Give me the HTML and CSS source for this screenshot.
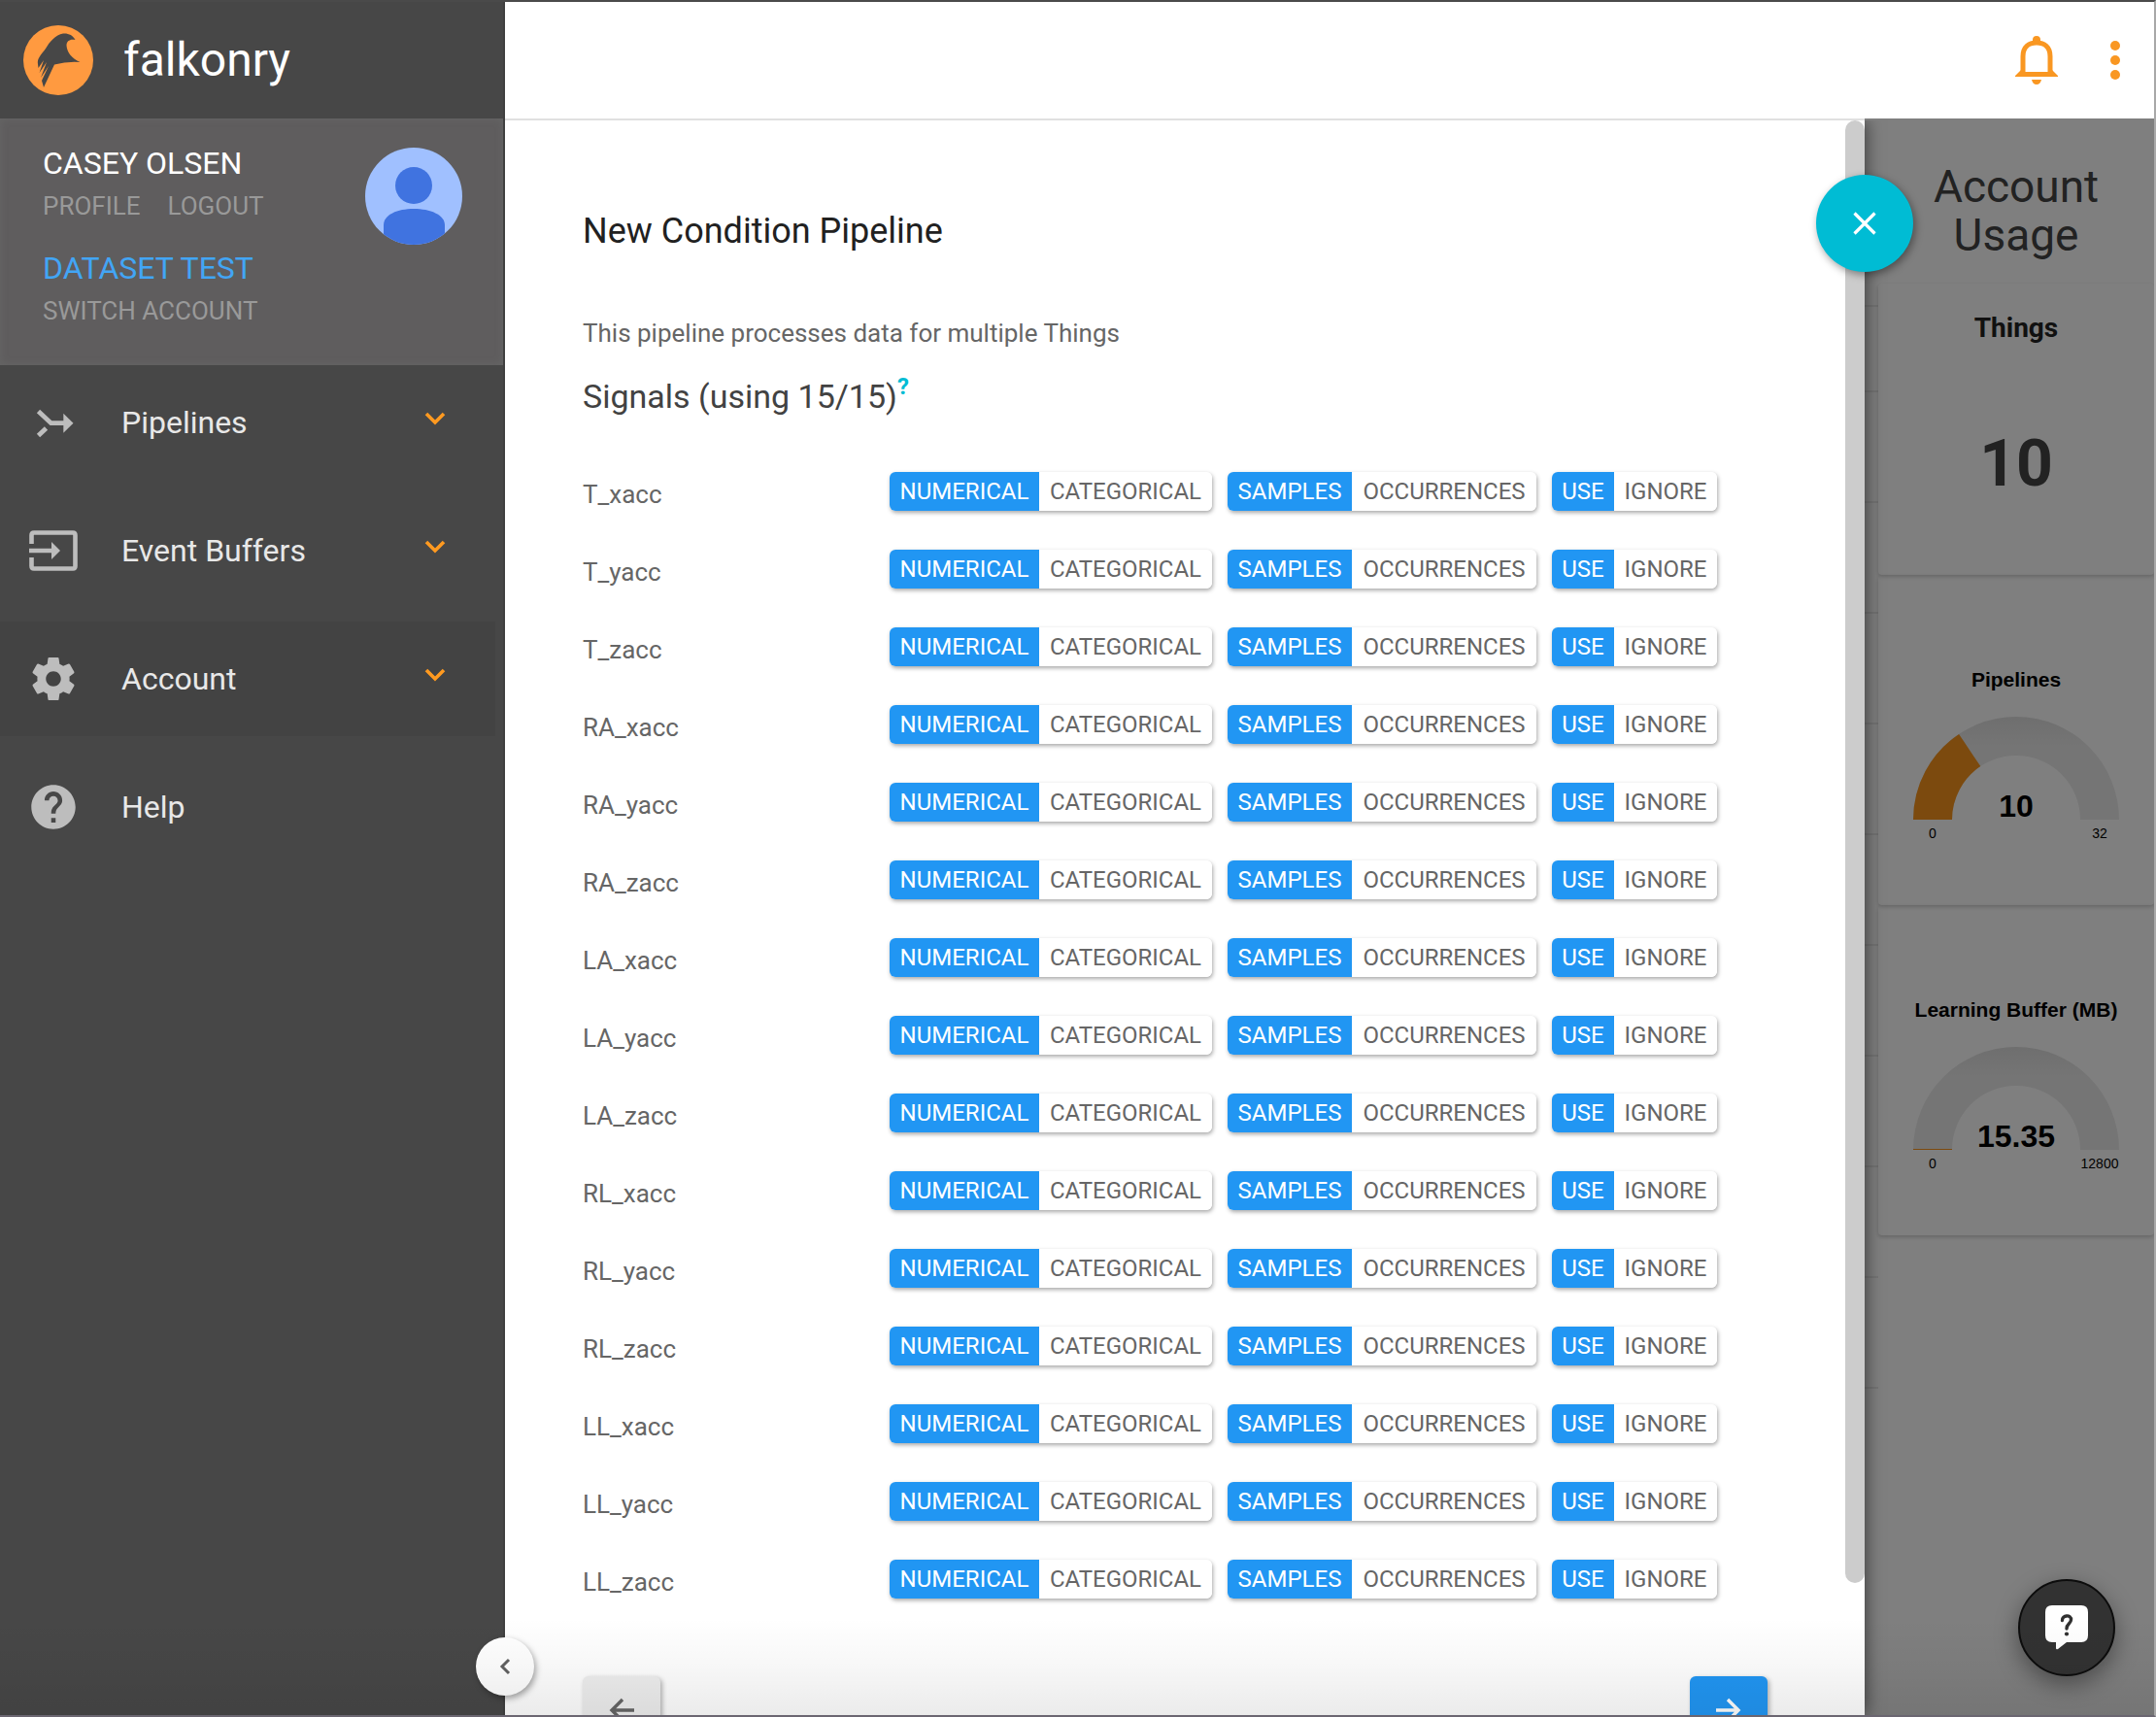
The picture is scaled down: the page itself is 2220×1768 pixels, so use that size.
FILE: index.html
```
<!DOCTYPE html>
<html lang="en">
<head>
<meta charset="utf-8">
<title>Falkonry</title>
<link rel="stylesheet" href="styles.css">
</head>
<body>
<div class="app">
  <aside class="sidebar">
    <div class="brand">
      <svg class="brand-logo" viewBox="0 0 72 72" aria-hidden="true"><circle cx="36" cy="36" r="36" fill="#ff9a40"/><path d="M53.500 15C51 10 46 8 41 8.500C33 10 27 17 23 24C18 31 14 34 15 40L15.500 44L21 36L16.500 49L24 38L18 54L26 42L19 57L21 64L32 40.500Q45 37 58.500 38C50 34 45 28 44.500 21C44.500 16 48 14 53.500 15Z" fill="#474747"/></svg>
      <span class="brand-name">falkonry</span>
    </div>
    <section class="profile">
      <div class="profile-info">
        <div class="profile-name">CASEY OLSEN</div>
        <div class="profile-links"><a href="#profile">PROFILE</a><a href="#logout">LOGOUT</a></div>
        <div class="profile-account">DATASET TEST</div>
        <div class="profile-links"><a href="#switch">SWITCH ACCOUNT</a></div>
      </div>
      <svg class="avatar" viewBox="0 0 100 100" aria-hidden="true"><defs><clipPath id="av"><circle cx="50" cy="50" r="50"/></clipPath></defs><g clip-path="url(#av)"><rect width="100" height="100" fill="#a0c0ff"/><circle cx="50" cy="39" r="19" fill="#4073e0"/><path d="M19 100V80C19 69 33 63 50 63S82 69 82 80V100Z" fill="#4073e0"/></g></svg>
    </section>
    <nav class="nav">
      <a class="nav-item" href="#pipelines">
        <svg class="nav-icon" viewBox="0 0 50 50" aria-hidden="true"><path d="M9.500 13.500L22.500 25.700H37M9.500 38.500L17.500 31" fill="none" stroke="#bdbdbd" stroke-width="4.800"/><path d="M35.300 15.700L45.500 25.700L35.300 35.700Z" fill="#bdbdbd"/></svg>
        <span>Pipelines</span><svg class="nav-caret" viewBox="0 0 22 14" aria-hidden="true"><path d="M2 2L11 11L20 2" fill="none" stroke="#ff9a20" stroke-width="3.6"/></svg></a>
      <a class="nav-item" href="#buffers">
        <svg class="nav-icon" viewBox="0 0 50 50" aria-hidden="true"><path d="M2.500 18V9Q2.500 6.500 5 6.500H45Q47.500 6.500 47.500 9V41Q47.500 43.500 45 43.500H5Q2.500 43.500 2.500 41V32M0 25H24" fill="none" stroke="#bdbdbd" stroke-width="4.600"/><path d="M23 16L32 25L23 34Z" fill="#bdbdbd"/></svg>
        <span>Event Buffers</span><svg class="nav-caret" viewBox="0 0 22 14" aria-hidden="true"><path d="M2 2L11 11L20 2" fill="none" stroke="#ff9a20" stroke-width="3.6"/></svg></a>
      <a class="nav-item nav-item-active" href="#account">
        <svg class="nav-icon" viewBox="0.700 0.700 22.600 22.600" aria-hidden="true"><path fill="#bdbdbd" d="M19.430 12.980c.04-.32.07-.64.07-.98s-.03-.66-.07-.98l2.110-1.650c.19-.15.24-.42.12-.64l-2-3.460c-.12-.22-.39-.3-.61-.22l-2.490 1c-.52-.4-1.080-.73-1.690-.98l-.38-2.650C14.460 2.180 14.250 2 14 2h-4c-.25 0-.46.18-.49.42l-.38 2.650c-.61.25-1.170.59-1.690.98l-2.490-1c-.23-.09-.49 0-.61.22l-2 3.460c-.13.22-.07.49.12.64l2.110 1.650c-.04.32-.07.65-.07.98s.03.66.07.98l-2.110 1.650c-.19.15-.24.42-.12.64l2 3.460c.12.22.39.3.61.22l2.490-1c.52.4 1.080.73 1.690.98l.38 2.650c.03.24.24.42.49.42h4c.25 0 .46-.18.49-.42l.38-2.650c.61-.25 1.170-.59 1.690-.98l2.490 1c.23.09.49 0 .61-.22l2-3.460c.12-.22.07-.49-.12-.64l-2.110-1.650zM12 15.500c-1.930 0-3.500-1.570-3.500-3.500s1.570-3.500 3.500-3.500 3.500 1.570 3.500 3.500-1.570 3.500-3.500 3.500z"/></svg>
        <span>Account</span><svg class="nav-caret" viewBox="0 0 22 14" aria-hidden="true"><path d="M2 2L11 11L20 2" fill="none" stroke="#ff9a20" stroke-width="3.6"/></svg></a>
      <a class="nav-item" href="#help">
        <svg class="nav-icon" viewBox="1 1 22 22" aria-hidden="true"><path fill="#bdbdbd" d="M12 2C6.480 2 2 6.480 2 12s4.480 10 10 10 10-4.480 10-10S17.520 2 12 2zm1 17h-2v-2h2v2zm2.070-7.750l-.9.920C13.450 12.900 13 13.500 13 15h-2v-.5c0-1.100.45-2.100 1.170-2.830l1.240-1.260c.37-.36.59-.86.59-1.410 0-1.100-.9-2-2-2s-2 .9-2 2H8c0-2.210 1.790-4 4-4s4 1.790 4 4c0 .88-.36 1.680-.93 2.250z"/></svg>
        <span>Help</span></a>
    </nav>
    <button class="collapse" type="button" aria-label="Collapse menu"><svg viewBox="0 0 12 18" aria-hidden="true"><path d="M10 2L3 9L10 16" fill="none" stroke="#616161" stroke-width="3"/></svg></button>
  </aside>

  <header class="topbar">
    <button class="icon-button bell" type="button" aria-label="Notifications"><svg viewBox="0 0 44 50" aria-hidden="true"><path d="M8 40V21C8 11 14 7 22 7S36 11 36 21V40" fill="none" stroke="#f99722" stroke-width="5"/><path d="M18 6V4A4 4 0 0 1 26 4V6ZM0 41L6 35V37H38V35L44 41V42H0ZM17 45H27Q26 50 22 50T17 45Z" fill="#f99722"/></svg></button>
    <button class="icon-button more" type="button" aria-label="More"><svg viewBox="0 0 10 40" aria-hidden="true"><g fill="#f99722"><circle cx="5" cy="5" r="5"/><circle cx="5" cy="20" r="5"/><circle cx="5" cy="35" r="5"/></g></svg></button>
  </header>

  <main class="workspace">
    <section class="panel">
      <h1 class="panel-title">New Condition Pipeline</h1>
      <p class="panel-note">This pipeline processes data for multiple Things</p>
      <h2 class="panel-subtitle">Signals (using 15/15)<a class="hint" href="#signals-help">?</a></h2>
      <ul class="signals">
        <li class="signal"><span class="signal-name">T_xacc</span><div class="toggle type"><button type="button" class="on">NUMERICAL</button><button type="button">CATEGORICAL</button></div><div class="toggle kind"><button type="button" class="on">SAMPLES</button><button type="button">OCCURRENCES</button></div><div class="toggle usage-choice"><button type="button" class="on">USE</button><button type="button">IGNORE</button></div></li>
        <li class="signal"><span class="signal-name">T_yacc</span><div class="toggle type"><button type="button" class="on">NUMERICAL</button><button type="button">CATEGORICAL</button></div><div class="toggle kind"><button type="button" class="on">SAMPLES</button><button type="button">OCCURRENCES</button></div><div class="toggle usage-choice"><button type="button" class="on">USE</button><button type="button">IGNORE</button></div></li>
        <li class="signal"><span class="signal-name">T_zacc</span><div class="toggle type"><button type="button" class="on">NUMERICAL</button><button type="button">CATEGORICAL</button></div><div class="toggle kind"><button type="button" class="on">SAMPLES</button><button type="button">OCCURRENCES</button></div><div class="toggle usage-choice"><button type="button" class="on">USE</button><button type="button">IGNORE</button></div></li>
        <li class="signal"><span class="signal-name">RA_xacc</span><div class="toggle type"><button type="button" class="on">NUMERICAL</button><button type="button">CATEGORICAL</button></div><div class="toggle kind"><button type="button" class="on">SAMPLES</button><button type="button">OCCURRENCES</button></div><div class="toggle usage-choice"><button type="button" class="on">USE</button><button type="button">IGNORE</button></div></li>
        <li class="signal"><span class="signal-name">RA_yacc</span><div class="toggle type"><button type="button" class="on">NUMERICAL</button><button type="button">CATEGORICAL</button></div><div class="toggle kind"><button type="button" class="on">SAMPLES</button><button type="button">OCCURRENCES</button></div><div class="toggle usage-choice"><button type="button" class="on">USE</button><button type="button">IGNORE</button></div></li>
        <li class="signal"><span class="signal-name">RA_zacc</span><div class="toggle type"><button type="button" class="on">NUMERICAL</button><button type="button">CATEGORICAL</button></div><div class="toggle kind"><button type="button" class="on">SAMPLES</button><button type="button">OCCURRENCES</button></div><div class="toggle usage-choice"><button type="button" class="on">USE</button><button type="button">IGNORE</button></div></li>
        <li class="signal"><span class="signal-name">LA_xacc</span><div class="toggle type"><button type="button" class="on">NUMERICAL</button><button type="button">CATEGORICAL</button></div><div class="toggle kind"><button type="button" class="on">SAMPLES</button><button type="button">OCCURRENCES</button></div><div class="toggle usage-choice"><button type="button" class="on">USE</button><button type="button">IGNORE</button></div></li>
        <li class="signal"><span class="signal-name">LA_yacc</span><div class="toggle type"><button type="button" class="on">NUMERICAL</button><button type="button">CATEGORICAL</button></div><div class="toggle kind"><button type="button" class="on">SAMPLES</button><button type="button">OCCURRENCES</button></div><div class="toggle usage-choice"><button type="button" class="on">USE</button><button type="button">IGNORE</button></div></li>
        <li class="signal"><span class="signal-name">LA_zacc</span><div class="toggle type"><button type="button" class="on">NUMERICAL</button><button type="button">CATEGORICAL</button></div><div class="toggle kind"><button type="button" class="on">SAMPLES</button><button type="button">OCCURRENCES</button></div><div class="toggle usage-choice"><button type="button" class="on">USE</button><button type="button">IGNORE</button></div></li>
        <li class="signal"><span class="signal-name">RL_xacc</span><div class="toggle type"><button type="button" class="on">NUMERICAL</button><button type="button">CATEGORICAL</button></div><div class="toggle kind"><button type="button" class="on">SAMPLES</button><button type="button">OCCURRENCES</button></div><div class="toggle usage-choice"><button type="button" class="on">USE</button><button type="button">IGNORE</button></div></li>
        <li class="signal"><span class="signal-name">RL_yacc</span><div class="toggle type"><button type="button" class="on">NUMERICAL</button><button type="button">CATEGORICAL</button></div><div class="toggle kind"><button type="button" class="on">SAMPLES</button><button type="button">OCCURRENCES</button></div><div class="toggle usage-choice"><button type="button" class="on">USE</button><button type="button">IGNORE</button></div></li>
        <li class="signal"><span class="signal-name">RL_zacc</span><div class="toggle type"><button type="button" class="on">NUMERICAL</button><button type="button">CATEGORICAL</button></div><div class="toggle kind"><button type="button" class="on">SAMPLES</button><button type="button">OCCURRENCES</button></div><div class="toggle usage-choice"><button type="button" class="on">USE</button><button type="button">IGNORE</button></div></li>
        <li class="signal"><span class="signal-name">LL_xacc</span><div class="toggle type"><button type="button" class="on">NUMERICAL</button><button type="button">CATEGORICAL</button></div><div class="toggle kind"><button type="button" class="on">SAMPLES</button><button type="button">OCCURRENCES</button></div><div class="toggle usage-choice"><button type="button" class="on">USE</button><button type="button">IGNORE</button></div></li>
        <li class="signal"><span class="signal-name">LL_yacc</span><div class="toggle type"><button type="button" class="on">NUMERICAL</button><button type="button">CATEGORICAL</button></div><div class="toggle kind"><button type="button" class="on">SAMPLES</button><button type="button">OCCURRENCES</button></div><div class="toggle usage-choice"><button type="button" class="on">USE</button><button type="button">IGNORE</button></div></li>
        <li class="signal"><span class="signal-name">LL_zacc</span><div class="toggle type"><button type="button" class="on">NUMERICAL</button><button type="button">CATEGORICAL</button></div><div class="toggle kind"><button type="button" class="on">SAMPLES</button><button type="button">OCCURRENCES</button></div><div class="toggle usage-choice"><button type="button" class="on">USE</button><button type="button">IGNORE</button></div></li>
      </ul>
      <div class="panel-actions">
        <button class="step step-back" type="button" aria-label="Back"><svg viewBox="0 0 26 26" aria-hidden="true"><path d="M26 13H3M14 2L3 13L14 24" fill="none" stroke="currentColor" stroke-width="3.400"/></svg></button>
        <button class="step step-next" type="button" aria-label="Next"><svg viewBox="0 0 26 26" aria-hidden="true"><path d="M0 13H23M12 2L23 13L12 24" fill="none" stroke="currentColor" stroke-width="3.400"/></svg></button>
      </div>
    </section>
    <div class="scroll-thumb"></div>
    <button class="close" type="button" aria-label="Close"><svg viewBox="0 0 24 24" aria-hidden="true"><path d="M1.500 1.500L22.500 22.500M22.500 1.500L1.500 22.500" fill="none" stroke="#fff" stroke-width="3.200"/></svg></button>

    <aside class="usage">
      <div class="rows" aria-hidden="true"><i></i><i></i><i></i><i></i><i></i><i></i><i></i><i></i><i></i><i></i><i></i></div>
      <div class="usage-column">
        <h2 class="usage-title">Account Usage</h2>
        <section class="card">
          <h3 class="card-title">Things</h3>
          <div class="card-value">10</div>
        </section>
        <section class="card">
          <svg class="gauge" viewBox="0 0 284 340" role="img" aria-label="Pipelines 10 of 32">
            <defs><linearGradient id="g" x1="0" y1="0" x2="0" y2="1"><stop offset="0" stop-color="#dedede"/><stop offset=".3" stop-color="#ebebeb"/></linearGradient></defs>
            <text class="gauge-title" x="142" y="115">Pipelines</text>
            <path d="M36 252A106 106 0 0 1 248 252H208A66 66 0 0 0 76 252Z" fill="url(#g)"/>
            <path d="M36 252A106 106 0 0 1 83.100 163.900L105.300 197.100A66 66 0 0 0 76 252Z" fill="#f8951d"/>
            <text class="gauge-value" x="142" y="249">10</text>
            <text class="gauge-limit" x="56" y="271">0</text><text class="gauge-limit" x="228" y="271">32</text>
          </svg>
        </section>
        <section class="card">
          <svg class="gauge" viewBox="0 0 284 340" role="img" aria-label="Learning Buffer 15.35 of 12800 MB">
            <text class="gauge-title" x="142" y="115">Learning Buffer (MB)</text>
            <path d="M36 252A106 106 0 0 1 248 252H208A66 66 0 0 0 76 252Z" fill="url(#g)"/>
            <path d="M36 251H76V252H36Z" fill="#f8951d"/>
            <text class="gauge-value" x="142" y="249">15.35</text>
            <text class="gauge-limit" x="56" y="271">0</text><text class="gauge-limit" x="228" y="271">12800</text>
          </svg>
        </section>
      </div>
      <div class="backdrop"></div>
    </aside>
    <button class="help" type="button" aria-label="Get help"><svg viewBox="0 0 44 46" aria-hidden="true"><path d="M7 0H37Q44 0 44 7V31Q44 38 37 38H22L13 45Q11 46 11 44V38H7Q0 38 0 31V7Q0 0 7 0Z" fill="#fff"/><path d="M17.500 15.500C17 10 27 9 26.500 15C26.300 19 22 18.500 22 24" fill="none" stroke="#303030" stroke-width="3.400" stroke-linecap="round"/><circle cx="22" cy="29.500" r="2.100" fill="#303030"/></svg></button>
  </main>
  <div class="fade"></div>
</div>
</body>
</html>
```

FILE: styles.css
```
* { box-sizing: border-box; }

body {
  margin: 0;
  font-family: Roboto, "Liberation Sans", sans-serif;
  background: #fff;
}

h1, h2, h3, p, ul { margin: 0; padding: 0; font-weight: 400; }
ul { list-style: none; }
a { color: inherit; text-decoration: none; }
svg { display: block; flex: none; }

button {
  margin: 0;
  padding: 0;
  border: 0;
  background: none;
  font: inherit;
  cursor: pointer;
}

.app {
  position: relative;
  display: grid;
  grid-template-columns: 520px minmax(0, 1fr);
  grid-template-rows: 122px minmax(0, 1fr);
  height: 100vh;
  overflow: hidden;
  border-top: 2px solid #4a4a4a;
  border-right: 2px solid #a8a8a8;
  border-bottom: 2px solid #6b6671;
}

/* Sidebar */
.sidebar {
  position: relative;
  z-index: 3;
  grid-row: 1 / 3;
  background: #474747;
  border-right: 2px solid #404040;
  color: #e8e8e8;
}

.brand {
  display: flex;
  align-items: center;
  gap: 31px;
  height: 120px;
  padding-left: 24px;
}
.brand-logo { width: 72px; height: 72px; }
.brand-name { font-size: 48px; line-height: 56px; color: #fff; }

.profile {
  display: flex;
  justify-content: space-between;
  height: 254px;
  padding: 26px 42px 0 44px;
  background: #5f5d5e;
  box-shadow: inset 0 0 8px #666;
}
.profile-name, .profile-account { font-size: 32px; line-height: 40px; }
.profile-name { color: #fff; }
.profile-account { margin-top: 26px; color: #42a5f5; }
.profile-links {
  display: flex;
  gap: 28px;
  padding-top: 6px;
  font-size: 26px;
  line-height: 36px;
  color: #999;
}
.avatar { width: 100px; height: 100px; margin-top: 4px; }

.nav { display: flex; flex-direction: column; gap: 14px; }
.nav-item {
  display: flex;
  align-items: center;
  height: 118px;
  width: 510px;
  padding: 0 51px 0 30px;
  font-size: 32px;
}
.nav-item-active { background: #434343; }
.nav-icon { width: 50px; height: 50px; margin-right: 45px; }
.nav-caret { width: 22px; height: 14px; margin: 0 0 8px auto; }

.collapse {
  position: absolute;
  right: -32px;
  bottom: 20px;
  display: grid;
  place-items: center;
  width: 60px;
  height: 60px;
  border-radius: 50%;
  background: #fff;
  box-shadow: 2px 3px 6px rgba(0, 0, 0, .35);
}
.collapse svg { width: 12px; height: 18px; }

/* Top bar */
.topbar {
  display: flex;
  justify-content: flex-end;
  align-items: center;
  gap: 54px;
  padding-right: 35px;
  border-bottom: 2px solid #e0e0e0;
}
.bell svg { width: 44px; height: 50px; }
.more svg { width: 10px; height: 40px; }

/* Workspace */
.workspace {
  position: relative;
  display: grid;
  grid-template-columns: minmax(0, 1fr) 298px;
  min-height: 0;
}

.panel {
  position: relative;
  z-index: 1;
  overflow: hidden;
  padding: 90px 100px 0 80px;
  background: #fff;
  box-shadow: 2px 0 16px rgba(0, 0, 0, .5);
  clip-path: inset(0 -24px 0 0);
}
.panel-title { font-size: 36px; line-height: 48px; color: #212121; }
.panel-note { margin-top: 63px; font-size: 26px; line-height: 36px; color: #666; }
.panel-subtitle { margin-top: 23px; font-size: 34px; line-height: 48px; color: #424242; }
.hint {
  font-size: 24px;
  font-weight: 700;
  line-height: 24px;
  vertical-align: 14px;
  color: #00bcd4;
}

.signals { margin-top: 54px; }
.signal { display: flex; gap: 16px; height: 80px; }
.signal-name {
  width: 300px;
  padding-top: 4px;
  font-size: 26px;
  line-height: 38px;
  color: #666;
}
.toggle {
  display: grid;
  height: 40px;
  border-radius: 6px;
  overflow: hidden;
  box-shadow: 1px 2px 4px rgba(0, 0, 0, .35);
}
.type { grid-template-columns: 154px 178px; }
.kind { grid-template-columns: 128px 190px; }
.usage-choice { grid-template-columns: 64px 106px; }
.toggle button {
  font-size: 24px;
  line-height: 40px;
  color: #666;
  background: #fff;
}
.toggle .on { background: #2196f3; color: #fff; }

.panel-actions { display: flex; justify-content: space-between; margin-top: 40px; }
.step {
  display: grid;
  place-items: center;
  width: 80px;
  height: 70px;
  border-radius: 6px;
  box-shadow: 2px 2px 5px rgba(0, 0, 0, .3);
}
.step svg { width: 26px; height: 26px; }
.step-back { background: #eee; color: #666; }
.step-next { background: #2196f3; color: #fff; }

.scroll-thumb {
  position: absolute;
  z-index: 2;
  top: 0;
  right: 298px;
  width: 20px;
  height: calc(100% - 136px);
  border-radius: 10px;
  background: #ccc;
}

.close {
  position: absolute;
  z-index: 2;
  top: 56px;
  right: 248px;
  display: grid;
  place-items: center;
  width: 100px;
  height: 100px;
  border-radius: 50%;
  background: #00bcd4;
  box-shadow: 2px 3px 8px rgba(0, 0, 0, .4);
}
.close svg { width: 24px; height: 24px; }

/* Account usage, dimmed behind the panel */
.usage {
  position: relative;
  display: grid;
  grid-template-columns: 14px minmax(0, 1fr);
  align-items: start;
  margin-top: -2px;
  background: #fff;
}
.backdrop { position: absolute; inset: 0; background: rgba(0, 0, 0, .5); }
.rows { padding-top: 80px; }
.rows i { display: block; height: 114px; border-bottom: 2px solid #ebebeb; }
.rows i:nth-child(2) { height: 88px; }
.usage-column { padding-top: 45px; text-align: center; }
.usage-title {
  padding: 0 40px;
  font-size: 46px;
  line-height: 50px;
  color: #444;
}
.card {
  height: 340px;
  border-radius: 4px;
  box-shadow: 0 2px 4px rgba(0, 0, 0, .2);
}
.usage-title + .card { height: 300px; margin-top: 25px; }
.card-title { padding-top: 28px; font-size: 28px; font-weight: 700; line-height: 36px; color: #222; }
.card-value { padding-top: 84px; font-size: 66px; font-weight: 700; line-height: 76px; color: #444; }
.gauge { width: 100%; }
.gauge text { font-family: "Liberation Sans", Arial, sans-serif; text-anchor: middle; }
.gauge-title { font-size: 21px; font-weight: 700; }
.gauge-value { font-size: 32px; font-weight: 700; }
.gauge-limit { font-size: 14px; }

.help {
  position: absolute;
  z-index: 2;
  right: 40px;
  bottom: 40px;
  display: grid;
  place-items: center;
  width: 100px;
  height: 100px;
  border: 2px solid #0c0c0c;
  border-radius: 50%;
  background: #323232;
  box-shadow: 0 8px 24px rgba(0, 0, 0, .4);
}
.help svg { width: 44px; height: 46px; }

.fade {
  position: absolute;
  z-index: 4;
  right: 0;
  bottom: 0;
  left: 0;
  height: 100px;
  background: linear-gradient(rgba(0, 0, 0, 0), rgba(0, 0, 0, .03) 50%, rgba(0, 0, 0, .08));
  pointer-events: none;
}
```
